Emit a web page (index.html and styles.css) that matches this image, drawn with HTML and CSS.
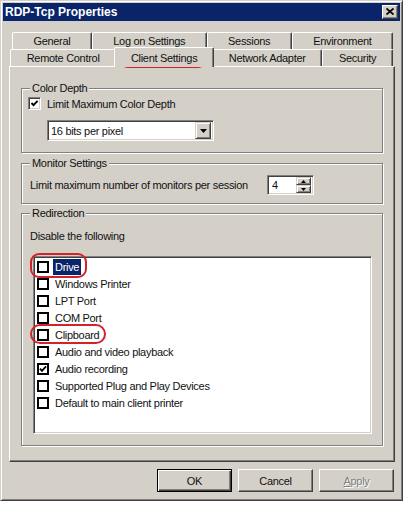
FILE: index.html
```html
<!DOCTYPE html>
<html lang="en">
<head>
    <meta charset="UTF-8">
    <meta name="viewport" content="width=device-width, initial-scale=1.0">
    <title>RDP-Tcp Properties</title>
    <link rel="stylesheet" href="styles.css">
</head>
<body>
    <div class="window">
        <div class="titlebar">
            <span class="title">RDP-Tcp Properties</span>
            <span class="close">
                <svg width="8" height="7" viewBox="0 0 8 7"><path d="M0.5 0.5L7.5 6.5M7.5 0.5L0.5 6.5" stroke="#000" stroke-width="1.7"/></svg>
            </span>
        </div>

        <div class="tabs">
            <div class="tab-row back">
                <div class="tab">General</div>
                <div class="tab">Log on Settings</div>
                <div class="tab">Sessions</div>
                <div class="tab">Environment</div>
            </div>
            <div class="tab-row front">
                <div class="tab">Remote Control</div>
                <div class="tab selected">Client Settings</div>
                <div class="tab">Network Adapter</div>
                <div class="tab">Security</div>
            </div>
        </div>

        <div class="panel">
            <fieldset class="group color-group">
                <legend>Color Depth</legend>
                <div class="check-row">
                    <span class="sunken-check">
                        <svg width="9" height="9" viewBox="0 0 9 9"><polyline points="1.5,4 3.5,6.2 7.6,1.8" fill="none" stroke="#000" stroke-width="1.9"/></svg>
                    </span>
                    <span>Limit Maximum Color Depth</span>
                </div>
                <div class="combo">
                    <span class="combo-text">16 bits per pixel</span>
                    <span class="combo-btn">
                        <svg width="7" height="4" viewBox="0 0 7 4"><polygon points="0,0 7,0 3.5,4" fill="#000"/></svg>
                    </span>
                </div>
            </fieldset>

            <fieldset class="group monitor-group">
                <legend>Monitor Settings</legend>
                <div class="monitor-row">
                    <span>Limit maximum number of monitors per session</span>
                    <div class="spinner">
                        <span class="spin-text">4</span>
                        <span class="spin-btns">
                            <span class="spin-btn"><svg width="5" height="3" viewBox="0 0 5 3"><polygon points="2.5,0 5,3 0,3" fill="#000"/></svg></span>
                            <span class="spin-btn"><svg width="5" height="3" viewBox="0 0 5 3"><polygon points="0,0 5,0 2.5,3" fill="#000"/></svg></span>
                        </span>
                    </div>
                </div>
            </fieldset>

            <fieldset class="group redirect-group">
                <legend>Redirection</legend>
                <div class="hint">Disable the following</div>
                <div class="list">
                    <div class="item"><span class="box"></span><span class="item-label active">Drive</span></div>
                    <div class="item"><span class="box"></span><span class="item-label">Windows Printer</span></div>
                    <div class="item"><span class="box"></span><span class="item-label">LPT Port</span></div>
                    <div class="item"><span class="box"></span><span class="item-label">COM Port</span></div>
                    <div class="item"><span class="box"></span><span class="item-label">Clipboard</span></div>
                    <div class="item"><span class="box"></span><span class="item-label">Audio and video playback</span></div>
                    <div class="item"><span class="box"><svg width="8" height="8" viewBox="0 0 8 8"><polyline points="1,3.6 3,5.8 7,1.4" fill="none" stroke="#000" stroke-width="1.8"/></svg></span><span class="item-label">Audio recording</span></div>
                    <div class="item"><span class="box"></span><span class="item-label">Supported Plug and Play Devices</span></div>
                    <div class="item"><span class="box"></span><span class="item-label">Default to main client printer</span></div>
                </div>
            </fieldset>
        </div>

        <div class="buttons">
            <button class="btn default">OK</button>
            <button class="btn">Cancel</button>
            <button class="btn disabled"><u>A</u>pply</button>
        </div>

        <div class="ring ring-tab"></div>
        <div class="ring ring-drive"></div>
        <div class="ring ring-clip"></div>
    </div>
</body>
</html>
```

FILE: styles.css
```css
* {
    box-sizing: border-box;
}
body {
    margin: 0;
    background: #fff;
    font-family: "Liberation Sans", Arial, sans-serif;
    font-size: 11px;
    letter-spacing: -0.3px;
    color: #111;
}
.window {
    position: relative;
    width: 403px;
    height: 501px;
    padding: 2px;
    background: #d4d0c8;
    border: 1px solid;
    border-color: #d4d0c8 #404040 #404040 #d4d0c8;
    box-shadow: inset 1px 1px #fff, inset -1px -1px #808080;
    display: flex;
    flex-direction: column;
}
.titlebar {
    height: 18px;
    background: #0a246a;
    display: flex;
    align-items: center;
    justify-content: space-between;
    padding: 0 2px;
}
.title {
    color: #fff;
    font-weight: bold;
    font-size: 12px;
    letter-spacing: 0;
}
.close {
    width: 16px;
    height: 14px;
    margin-bottom: 1px;
    background: #d4d0c8;
    border: 1px solid;
    border-color: #fff #404040 #404040 #fff;
    box-shadow: inset -1px -1px #808080;
    display: flex;
    align-items: center;
    justify-content: center;
}

/* tabs */
.tabs {
    margin: 11px 0 0 6px;
    width: 386px;
}
.tab-row {
    display: flex;
    height: 17px;
}
.tab-row.back {
    margin: 0 2px 0 3px;
}
.tab-row.front {
    margin: 0 2px 0 1px;
}
.tab {
    flex: 1 1 auto;
    display: flex;
    align-items: center;
    justify-content: center;
    padding: 0 6px;
    white-space: nowrap;
    background: #d4d0c8;
    border-top: 1px solid #fff;
    border-left: 1px solid #fff;
    border-right: 1px solid #404040;
    box-shadow: inset -1px 0 #808080;
    border-radius: 2px 2px 0 0;
}
.tab.selected {
    margin: -2px -2px -1px;
    position: relative;
    z-index: 1;
}

/* panel */
.panel {
    margin-left: 6px;
    width: 386px;
    height: 396px;
    padding: 15px 11px 0;
    border: 1px solid;
    border-color: #fff #404040 #404040 #fff;
    box-shadow: inset -1px -1px #808080;
    display: flex;
    flex-direction: column;
}
.group {
    margin: 0;
    min-width: 0;
    padding: 0 8px;
    border: 1px solid #808080;
    box-shadow: 1px 1px #fff, inset 1px 1px #fff;
}
.group legend {
    padding: 0 2px;
    line-height: 13px;
    background: #d4d0c8;
}
.color-group {
    padding-bottom: 11px;
}
.monitor-group {
    margin-top: 4px;
    padding-bottom: 8px;
}
.redirect-group {
    margin-top: 3px;
    padding-bottom: 11px;
}

.check-row {
    display: flex;
    align-items: center;
    gap: 6px;
    height: 13px;
    margin: 2px 0 0 -2px;
}
.sunken-check {
    width: 13px;
    height: 13px;
    background: #fff;
    border: 1px solid;
    border-color: #808080 #fff #fff #808080;
    box-shadow: inset 1px 1px #404040, inset -1px -1px #d4d0c8;
    display: flex;
    align-items: center;
    justify-content: center;
}

.combo, .spinner {
    background: #fff;
    border: 1px solid;
    border-color: #808080 #fff #fff #808080;
    box-shadow: inset 1px 1px #404040, inset -1px -1px #d4d0c8;
    display: flex;
    align-items: center;
    padding: 2px;
}
.combo {
    width: 167px;
    height: 21px;
    margin: 10px 0 0 17px;
}
.combo-text {
    flex: 1;
    padding-left: 1px;
}
.combo-btn, .spin-btn {
    background: #d4d0c8;
    border: 1px solid;
    border-color: #d4d0c8 #404040 #404040 #d4d0c8;
    box-shadow: inset 1px 1px #fff, inset -1px -1px #808080;
    display: flex;
    align-items: center;
    justify-content: center;
}
.combo-btn {
    width: 16px;
    height: 17px;
}

.monitor-row {
    display: flex;
    align-items: center;
    height: 20px;
    margin-top: 5px;
}
.spinner {
    width: 47px;
    height: 20px;
    margin-left: auto;
    margin-right: 60px;
}
.spin-text {
    flex: 1;
    padding-left: 2px;
}
.spin-btns {
    display: flex;
    flex-direction: column;
    height: 16px;
}
.spin-btn {
    width: 15px;
    height: 8px;
}

.hint {
    margin-top: 10px;
    line-height: 13px;
}
.list {
    height: 178px;
    margin: 13px 2px 0 3px;
    background: #fff;
    border: 1px solid;
    border-color: #808080 #fff #fff #808080;
    box-shadow: inset 1px 1px #404040, inset -1px -1px #d4d0c8;
    padding: 1px;
}
.item {
    height: 17px;
    display: flex;
    align-items: center;
    padding-left: 2px;
}
.box {
    width: 12px;
    height: 12px;
    border: 2px solid #000;
    background: #fff;
    display: flex;
    align-items: center;
    justify-content: center;
}
.item-label {
    margin-left: 4px;
    padding: 0 2px;
    line-height: 16px;
}
.item-label.active {
    background: #0a246a;
    color: #fff;
}

/* dialog buttons */
.buttons {
    display: flex;
    justify-content: flex-end;
    gap: 6px;
    margin-top: 7px;
    padding-right: 6px;
}
.btn {
    width: 75px;
    height: 23px;
    font-family: inherit;
    font-size: 11px;
    letter-spacing: inherit;
    color: #111;
    background: #d4d0c8;
    border: 1px solid;
    border-color: #fff #404040 #404040 #fff;
    box-shadow: inset -1px -1px #808080;
    padding: 0;
}
.btn.default {
    border-color: #000;
    box-shadow: inset 1px 1px #fff, inset -1px -1px #404040, inset -2px -2px #808080;
}
.btn.disabled {
    color: #808080;
    text-shadow: 1px 1px #fff;
}

/* red annotation marks */
.ring {
    position: absolute;
    border: 2px solid #d2232a;
}
.ring-tab {
    left: 117px;
    top: 48px;
    width: 90px;
    height: 19px;
    border-radius: 10px;
}
.ring-drive {
    left: 29px;
    top: 252px;
    width: 57px;
    height: 25px;
    border-radius: 9px;
}
.ring-clip {
    left: 29px;
    top: 323px;
    width: 76px;
    height: 20px;
    border-radius: 10px;
}
```
